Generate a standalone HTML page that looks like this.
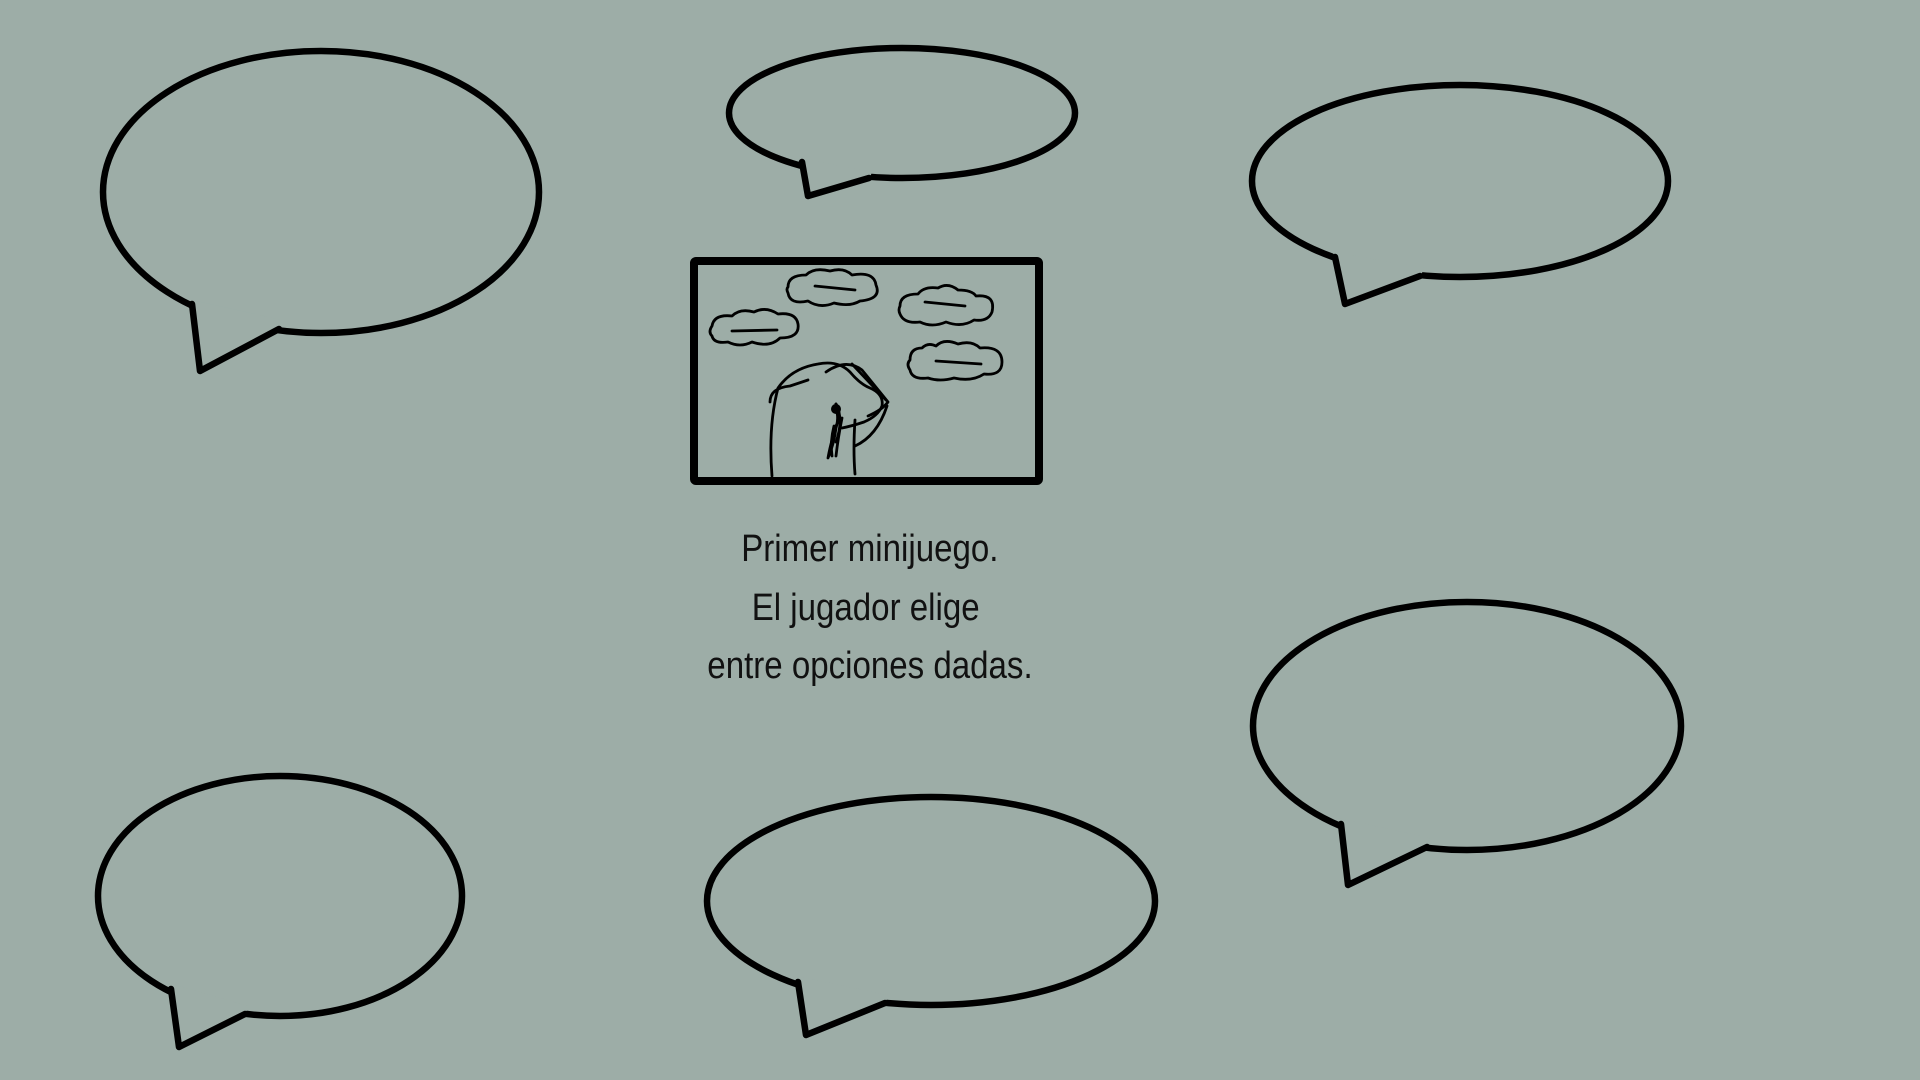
<!DOCTYPE html>
<html><head><meta charset="utf-8"><style>
html,body{margin:0;padding:0;background:#9dada7;width:1920px;height:1080px;overflow:hidden}
svg{position:absolute;left:0;top:0}
.t{position:absolute;left:0;width:1740px;text-align:center;font-family:"Liberation Sans Narrow","Liberation Sans",sans-serif;font-size:38px;color:#111;line-height:1}
.t span{display:inline-block;transform:scaleX(0.87);}
</style></head><body>
<svg width="1920" height="1080" viewBox="0 0 1920 1080" fill="none" stroke="#000" stroke-linecap="round" stroke-linejoin="round">
<g stroke-width="6.5">
<ellipse cx="321" cy="192" rx="218" ry="141"/>
<polygon points="192,300 200,371 279,332 282,320" fill="#9dada7" stroke="none"/>
<polyline points="192,304 200,371 279,329"/>

<ellipse cx="902" cy="113" rx="173" ry="65"/>
<polygon points="800,158 808,196 869,180 872,172" fill="#9dada7" stroke="none"/>
<polyline points="802,162 808,196 869,178"/>

<ellipse cx="1460" cy="181" rx="208" ry="96"/>
<polygon points="1333,252 1345,304 1420,278 1424,268" fill="#9dada7" stroke="none"/>
<polyline points="1335,257 1345,304 1420,276"/>

<ellipse cx="1467" cy="726" rx="214" ry="124"/>
<polygon points="1339,818 1348,885 1427,849 1430,838" fill="#9dada7" stroke="none"/>
<polyline points="1341,824 1348,885 1427,847"/>

<ellipse cx="280" cy="896" rx="182" ry="120"/>
<polygon points="169,983 179,1047 245,1016 248,1006" fill="#9dada7" stroke="none"/>
<polyline points="171,989 179,1047 245,1014"/>

<ellipse cx="931" cy="901" rx="224" ry="104"/>
<polygon points="796,976 806,1035 885,1005 888,995" fill="#9dada7" stroke="none"/>
<polyline points="798,982 806,1035 885,1003"/>
</g>
<rect x="694" y="261" width="345" height="220" stroke-width="8" rx="2"/>
<g stroke-width="2.8">
<path d="M712,326 q2,-12 20,-10 q8,-8 22,-4 q12,-6 24,2 q18,-2 20,10 q2,14 -18,14 q-10,10 -28,4 q-12,6 -24,0 q-14,2 -16,-6 q-4,-4 0,-10z"/>
<path d="M732,331 l45,-1"/>
<path d="M788,287 q0,-12 18,-12 q8,-8 24,-4 q14,-4 22,4 q22,-4 24,10 q6,14 -16,16 q-10,6 -26,2 q-14,6 -26,-2 q-18,4 -20,-8 q-2,-4 0,-6z"/>
<path d="M815,286 l40,4"/>
<path d="M900,306 q0,-12 18,-12 q6,-8 20,-6 q10,-6 20,2 q14,0 18,6 q20,-2 16,16 q-4,10 -18,8 q-12,8 -28,2 q-14,6 -26,0 q-16,2 -20,-8 q-2,-4 0,-8z"/>
<path d="M925,302 l40,4"/>
<path d="M910,360 q0,-12 12,-12 q6,-6 14,-2 q8,-8 22,-2 q14,-4 22,4 q22,-2 22,14 q0,14 -18,12 q-12,8 -30,4 q-14,4 -26,0 q-16,2 -18,-8 q-4,-6 0,-10z"/>
<path d="M936,361 l45,3"/>
<path d="M772,476 q-4,-50 6,-88 q14,-20 40,-24 q20,-4 32,8 q10,12 20,16 q14,6 12,18 q-4,10 -18,16 q-12,4 -22,6"/>
<path d="M770,402 q0,-14 20,-16 l18,-6"/>
<path d="M826,372 q20,-14 36,-2 l26,32 q-6,8 -20,14"/>
<path d="M852,364 l34,36"/>
<path d="M836,404 q6,10 0,22 q-6,20 -8,32 q6,-14 8,-30 q4,-14 -2,-22"/>
<path d="M834,426 q-4,16 -2,30"/>
<path d="M842,418 q-4,20 -6,38"/>
<path d="M836,404 q8,16 0,38"/>
<path d="M836,409 l0,0" stroke-width="10"/>
<path d="M855,420 q-2,30 0,54"/>
<path d="M855,446 q22,-10 32,-40"/>
</g>
</svg>
<div class="t" style="top:530px"><span>Primer minijuego.</span></div>
<div class="t" style="top:589px;"><span>El jugador elige&nbsp;</span></div>
<div class="t" style="top:647px"><span>entre opciones dadas.</span></div>
</body></html>
